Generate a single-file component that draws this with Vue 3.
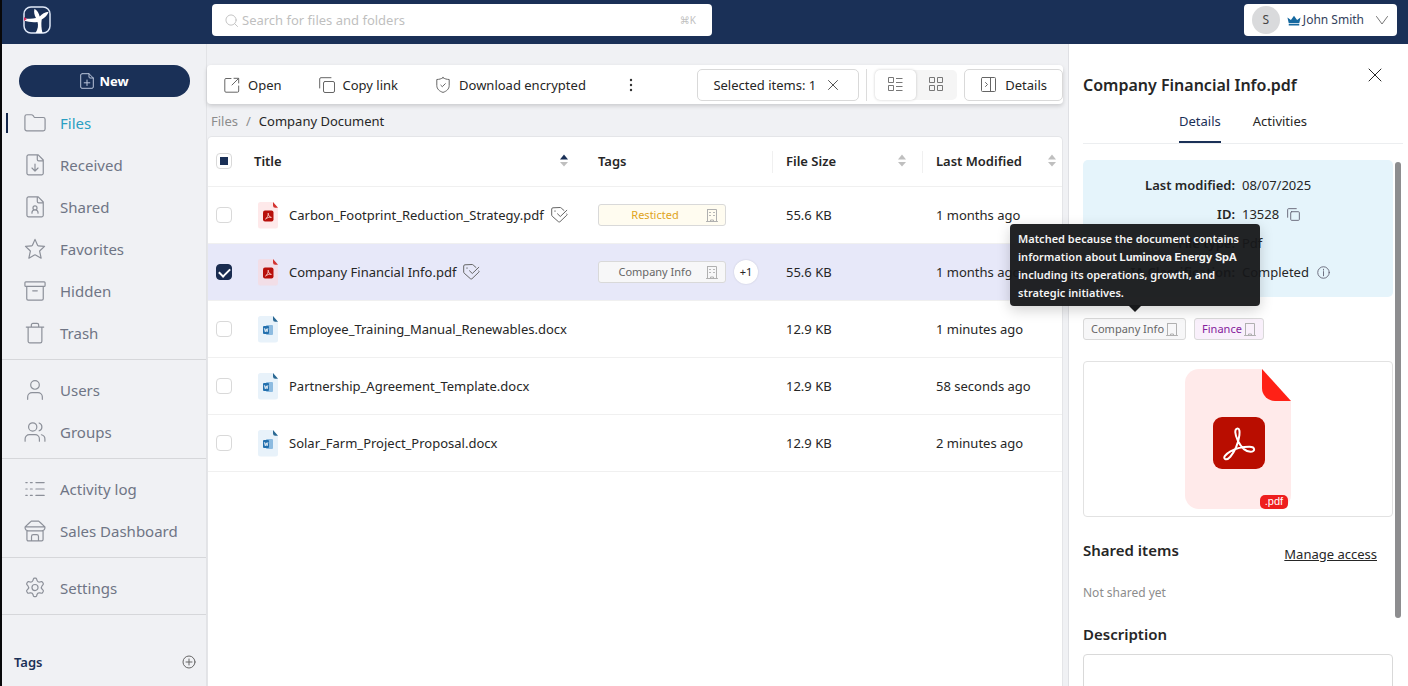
<script setup>
import { ref } from 'vue'

const groups = [
  [
    { label: 'Files', icon: 'folder', active: true },
    { label: 'Received', icon: 'received' },
    { label: 'Shared', icon: 'shared' },
    { label: 'Favorites', icon: 'star' },
    { label: 'Hidden', icon: 'archive' },
    { label: 'Trash', icon: 'trash' },
  ],
  [
    { label: 'Users', icon: 'user' },
    { label: 'Groups', icon: 'users' },
  ],
  [
    { label: 'Activity log', icon: 'list' },
    { label: 'Sales Dashboard', icon: 'store' },
  ],
  [{ label: 'Settings', icon: 'gear' }],
]

const icons = {
  folder: 'M1 18.500V5a2 2 0 0 1 2-2H8c.8 0 1.500.4 2 1l.9 1.200c.4.5 1 .8 1.600.8H21a2 2 0 0 1 2 2v10.500a2 2 0 0 1-2 2H3a2 2 0 0 1-2-2z',
  received: 'M5 1h10.500l5.500 5.500V21a1.800 1.800 0 0 1-1.800 1.800H5A1.800 1.800 0 0 1 3.200 21V2.800A1.800 1.800 0 0 1 5 1zM14.500 1V6c0 .8.6 1.500 1.500 1.500h5M12 11v7.500M8.700 15.300l3.300 3.300 3.300-3.300',
  shared: 'M5 1h10.500l5.500 5.500V21a1.800 1.800 0 0 1-1.800 1.800H5A1.800 1.800 0 0 1 3.200 21V2.800A1.800 1.800 0 0 1 5 1zM14.500 1V6c0 .8.6 1.500 1.500 1.500h5M14.200 13a2.200 2.200 0 1 1-4.400 0 2.200 2.200 0 0 1 4.400 0zM8.700 18.800v-.8c0-1.600 1.200-2.700 3.300-2.700s3.300 1.100 3.300 2.700v.8',
  star: 'M12 1.500l2.900 6.600c.1.3.3.4.6.4l6.900.6-5.100 4.800c-.2.2-.3.5-.2.8l1.600 7.300-6.100-3.500a1.200 1.200 0 0 0-1.200 0L5.300 22l1.600-7.300c.1-.3 0-.6-.2-.8L1.600 9.100l6.900-.6c.3 0 .5-.1.6-.4z',
  archive: 'M2 2h20a1 1 0 0 1 1 1v3a1 1 0 0 1-1 1H2a1 1 0 0 1-1-1V3a1 1 0 0 1 1-1zM3 7v13.500A1.500 1.500 0 0 0 4.500 22h15a1.500 1.500 0 0 0 1.500-1.500V7M9.500 11.800h5',
  trash: 'M2.500 5.500h19M4.500 5.500V21A1.800 1.800 0 0 0 6.300 22.800h11.400A1.800 1.800 0 0 0 19.500 21V5.500M8 5.500V3.200A1.700 1.700 0 0 1 9.700 1.500h4.600A1.700 1.700 0 0 1 16 3.200v2.300',
  user: 'M16.700 6.500a4.700 4.700 0 1 1-9.400 0 4.700 4.700 0 0 1 9.400 0zM4 22.200v-2.700A4.800 4.800 0 0 1 8.800 14.800h6.400a4.800 4.800 0 0 1 4.800 4.700v2.700',
  users: 'M14 6.500a4.500 4.500 0 1 1-9 0 4.500 4.500 0 0 1 9 0zM1.200 22v-2.500A4.700 4.700 0 0 1 5.900 14.800h6.200a4.700 4.700 0 0 1 4.700 4.700V22M16.500 2.200a4.500 4.500 0 0 1 0 8.500M19 15c2.400.6 3.800 2.400 3.800 4.500V22',
  list: 'M2 5h1.500M2 12h1.500M2 19h1.500M7 5h2M7 12h2M7 19h2M13 5h9M13 12h9M13 19h9',
  store: 'M6 3l2-1.800h8L18 3M6 3L1.200 7.500v1.500a3.500 3.500 0 0 0 3.500 2.800h14.600A3.500 3.500 0 0 0 22.800 9V7.500L18 3M1.200 7.500h21.600M3.200 12v9.300a1.500 1.500 0 0 0 1.500 1.500h14.600a1.500 1.500 0 0 0 1.500-1.500V12M8.200 22.500V18a2 2 0 0 1 2-2h3.600a2 2 0 0 1 2 2v4.500',
  gear: 'M9.800 3.700l.5-1.600c.2-.5.6-.8 1.100-.8h1.200c.5 0 .9.300 1.100.8l.5 1.600c.4 1.300 1.700 2.100 3.100 1.800l1.600-.4c.5-.1 1 .1 1.300.6l.8 1.300c.2.500.2 1-.2 1.400l-1.100 1.200c-.9 1-.9 2.600 0 3.600l1.100 1.200c.4.400.4.900.2 1.400l-.8 1.300c-.3.500-.8.700-1.300.6l-1.600-.4c-1.400-.3-2.700.5-3.100 1.800l-.5 1.600c-.2.500-.6.800-1.100.8h-1.200c-.5 0-.9-.3-1.100-.8l-.5-1.600c-.4-1.300-1.700-2.100-3.100-1.800l-1.600.4c-.5.100-1-.1-1.300-.6L3 15.800c-.2-.5-.2-1 .2-1.400l1.100-1.200c.9-1 .9-2.600 0-3.600L3.200 8.400c-.4-.4-.4-.9-.2-1.400l.8-1.300c.3-.5.8-.7 1.300-.6l1.600.4c1.400.3 2.700-.5 3.100-1.800zM15.300 11.500a3.300 3.300 0 1 1-6.600 0 3.300 3.300 0 0 1 6.600 0z',
}

const files = ref([
  { name: 'Carbon_Footprint_Reduction_Strategy.pdf', type: 'pdf', matched: true, tag: 'Resticted', tone: 'gold', size: '55.6 KB', date: '1 months ago', checked: false },
  { name: 'Company Financial Info.pdf', type: 'pdf', matched: true, tag: 'Company Info', tone: 'gray', more: '+1', size: '55.6 KB', date: '1 months ago', checked: true },
  { name: 'Employee_Training_Manual_Renewables.docx', type: 'docx', size: '12.9 KB', date: '1 minutes ago', checked: false },
  { name: 'Partnership_Agreement_Template.docx', type: 'docx', size: '12.9 KB', date: '58 seconds ago', checked: false },
  { name: 'Solar_Farm_Project_Proposal.docx', type: 'docx', size: '12.9 KB', date: '2 minutes ago', checked: false },
])

const building = 'M1.500.5h9v12M1.500.5v12M.5 12.500h11M4.500 12.500V11h3v1.500'
const windows = 'M3.500 3.500h1M7.500 3.500h1M3.500 6.500h1M7.500 6.500h1'
</script>

<template>
  <div class="app">
    <header class="topbar">
      <a class="logo" href="#" aria-label="Home">
        <svg viewBox="0 0 28 28" width="28" height="28">
          <rect x="1" y="1" width="26" height="26" rx="7" fill="none" stroke="#dfe8f8" stroke-width="1.500" />
          <path d="M12.500 27c2.600-4 3-8 2-11C10 16.500 5 16 1.500 14.800l.2-2.600c4 .8 8 .6 11.300-.2C11.500 9.500 10.500 6 11.500 2.800c2.800 1.700 4.500 4.700 5.200 7.700 2.300-2.500 5.300-4.300 9-4.700-1 3.200-3.800 6-7 7.700-.700 4.500-.3 9 .8 13.500z" fill="#fff" />
          <path d="M1 11v4l3-2z" fill="#d6285c" />
        </svg>
      </a>
      <label class="search">
        <svg viewBox="0 0 14 14" width="13" height="13" class="ln"><circle cx="6.500" cy="6.500" r="5.500" /><path d="M10.500 10.500l3 3" /></svg>
        <input type="search" placeholder="Search for files and folders" aria-label="Search" />
        <kbd>⌘K</kbd>
      </label>
      <button class="account" type="button">
        <span class="avatar">S</span>
        <svg class="crown" viewBox="0 0 16 12" width="14" height="11"><path d="M.500 2.500l4 3L8 .5l3.500 5 4-3L14 9H2zM2 10h12v1.800H2z" fill="#15689f" /></svg>
        <span>John Smith</span>
        <svg class="ln caret" viewBox="0 0 12 9" width="12" height="9"><path d="M.5.5L6 8 11.500.5" /></svg>
      </button>
    </header>

    <div class="body">
      <nav class="sidebar">
        <button class="new" type="button">
          <svg viewBox="0 0 14 16" width="14" height="16" class="ln"><path d="M2.500.7h6.500l4.300 4.300v9a1.300 1.300 0 0 1-1.300 1.300H2A1.300 1.300 0 0 1 .7 14V2A1.300 1.300 0 0 1 2 .7zM9 .7V4a1 1 0 0 0 1 1h3.300M7 7v5.500M4.200 9.800h5.600" /></svg>
          New
        </button>
        <ul v-for="(g, i) in groups" :key="i" class="group">
          <li v-for="item in g" :key="item.label">
            <a href="#" class="nav" :class="{ active: item.active }">
              <svg viewBox="0 0 24 24" width="22" height="22" class="ln"><path :d="icons[item.icon]" /></svg>
              {{ item.label }}
            </a>
          </li>
        </ul>
        <div class="tags-head">
          <h2>Tags</h2>
          <button type="button" aria-label="Add tag">
            <svg viewBox="0 0 14 14" width="14" height="14" class="ln"><circle cx="7" cy="7" r="6" /><path d="M7 4v6M4 7h6" /></svg>
          </button>
        </div>
      </nav>

      <main class="main">
        <div class="toolbar">
          <button class="tool" type="button">
            <svg viewBox="0 0 16 16" width="16" height="16" class="ln"><path d="M7 1.500H2a1.200 1.200 0 0 0-1.200 1.200V14A1.200 1.200 0 0 0 2 15.200h11.500a1.200 1.200 0 0 0 1.200-1.200V9M10 1.300h4.700V6M14.500 1.500L8 8" /></svg>
            Open
          </button>
          <button class="tool" type="button">
            <svg viewBox="0 0 16 16" width="16" height="16" class="ln"><rect x="4.500" y="4.500" width="11" height="11" rx="1.500" /><path d="M.7 11V2A1.300 1.300 0 0 1 2 .7h10" /></svg>
            Copy link
          </button>
          <button class="tool" type="button">
            <svg viewBox="0 0 16 16" width="16" height="16" class="ln"><path d="M8 .7c1.800 1.200 3.800 1.700 6.200 1.800v6c0 3.500-2.700 5.800-6.200 6.900-3.500-1.100-6.200-3.400-6.200-6.900v-6C4.200 2.400 6.200 1.900 8 .7zM5.800 8.200l1.500 1.500L10.300 6.700" /></svg>
            Download encrypted
          </button>
          <button class="more" type="button" aria-label="More"><svg viewBox="0 0 4 14" width="4" height="14" fill="#333"><circle cx="2" cy="2" r="1.200" /><circle cx="2" cy="7" r="1.200" /><circle cx="2" cy="12" r="1.200" /></svg></button>
          <button class="boxed selected" type="button">
            Selected items: 1
            <svg viewBox="0 0 10 10" width="10" height="10" class="ln"><path d="M.5.5l9 9M9.500.5l-9 9" /></svg>
          </button>
          <span class="rule"></span>
          <div class="views">
            <button type="button" class="on" aria-label="List view"><svg viewBox="0 0 15 15" width="15" height="15" class="ln sq"><path d="M.5.5h5v5h-5zM.5 8.500h5v5h-5zM8 1.500h6.500M8 5.500h6.500M8 9.500h6.500M8 13.500h6.500" /></svg></button>
            <button type="button" aria-label="Grid view"><svg viewBox="0 0 15 15" width="15" height="15" class="ln sq"><path d="M.5.5h5v5h-5zM.5 8.500h5v5h-5zM8.500.5h5v5h-5zM8.500 8.500h5v5h-5z" /></svg></button>
          </div>
          <button class="boxed details" type="button">
            <svg viewBox="0 0 15 15" width="15" height="15" class="ln"><path d="M1.500.5h12a1 1 0 0 1 1 1v12a1 1 0 0 1-1 1h-12a1 1 0 0 1-1-1v-12a1 1 0 0 1 1-1zM9.500.5v14M4.500 5.500l2 2-2 2" /></svg>
            Details
          </button>
        </div>

        <div class="crumbs"><a href="#">Files</a><span class="slash">/</span><span class="here">Company Document</span></div>

        <div class="card">
          <table>
            <colgroup><col class="c1" /><col /><col class="c3" /><col class="c4" /><col class="c5" /></colgroup>
            <thead>
              <tr>
                <th class="pick"><input type="checkbox" class="partial" aria-label="Select all" /></th>
                <th><div class="head">Title <svg class="sort asc" viewBox="0 0 8 13" width="8" height="13"><path class="up" d="M0 5.500L4 .5l4 5z" /><path d="M0 8h8l-4 4.500z" /></svg></div></th>
                <th>Tags</th>
                <th class="sep"><div class="head">File Size <svg class="sort" viewBox="0 0 8 13" width="8" height="13"><path d="M0 5.500L4 .5l4 5z" /><path d="M0 8h8l-4 4.500z" /></svg></div></th>
                <th class="sep"><div class="head last">Last Modified <svg class="sort" viewBox="0 0 8 13" width="8" height="13"><path d="M0 5.500L4 .5l4 5z" /><path d="M0 8h8l-4 4.500z" /></svg></div></th>
              </tr>
            </thead>
            <tbody>
              <tr v-for="f in files" :key="f.name" :class="{ sel: f.checked }">
                <td class="pick"><input v-model="f.checked" type="checkbox" :aria-label="f.name" /></td>
                <td>
                  <div class="file">
                    <svg v-if="f.type === 'pdf'" viewBox="0 0 22 28" width="22" height="28">
                      <path d="M3.500 1H16l5 6v18a2.500 2.500 0 0 1-2.500 2.500h-15A2.500 2.500 0 0 1 1 25V3.500A2.500 2.500 0 0 1 3.500 1z" fill="#fdd3d6" fill-opacity=".5" />
                      <path d="M16 1v3.500A2.200 2.200 0 0 0 18.200 6.700H21z" fill="#d3322f" />
                      <rect x="6" y="9.500" width="10.500" height="11" rx="2" fill="#b80f0a" />
                      <path d="M8.500 18c2-1.500 3-3.700 2.700-5.800 0 2.100 1.200 3.900 3.200 4.200-2.200-.4-4.100.2-5.900 1.600z" fill="none" stroke="#ffd9d6" stroke-width=".8" />
                    </svg>
                    <svg v-else viewBox="0 0 22 28" width="22" height="28">
                      <path d="M3.500 1H16l5 6v18a2.500 2.500 0 0 1-2.500 2.500h-15A2.500 2.500 0 0 1 1 25V3.500A2.500 2.500 0 0 1 3.500 1z" fill="#e8f2fa" />
                      <path d="M16 1v3.500A2.200 2.200 0 0 0 18.200 6.700H21z" fill="#2a6893" />
                      <rect x="9" y="10" width="7" height="10" rx="1" fill="#8dbbe0" />
                      <rect x="6" y="11" width="6" height="8" rx="1" fill="#2370ae" />
                      <path d="M7.300 13.200l1 3.600.9-3 .9 3 .8-3.600" fill="none" stroke="#fff" stroke-width=".8" />
                    </svg>
                    <span>{{ f.name }}</span>
                    <svg v-if="f.matched" class="ln match" viewBox="0 0 17 16" width="17" height="16"><path d="M13 3.500L10.200 1C9.800.7 9.500.5 9 .5L2 .8C1.200.8.700 1.300.700 2v6c0 .5.2.9.5 1.200l6.200 5.500c.5.4 1.200.4 1.600 0l6.800-6.500c.4-.4.4-.9 0-1.300M6.500 6.800L9.300 9.500l6.500-6.200M4 3.800v.6" /></svg>
                  </div>
                </td>
                <td>
                  <div v-if="f.tag" class="tagcell">
                    <span class="tag wide" :class="f.tone"><span>{{ f.tag }}</span><svg viewBox="0 0 12 13" width="12" height="13" class="ln"><path :d="building" /><path :d="windows" /></svg></span>
                    <button v-if="f.more" class="plus" type="button">{{ f.more }}</button>
                  </div>
                </td>
                <td>{{ f.size }}</td>
                <td>{{ f.date }}</td>
              </tr>
            </tbody>
          </table>
        </div>
      </main>

      <aside class="panel">
        <div class="panel-head">
          <h1>Company Financial Info.pdf</h1>
          <button type="button" aria-label="Close"><svg viewBox="0 0 14 14" width="14" height="14" class="ln"><path d="M1 1l12 12M13 1L1 13" /></svg></button>
        </div>
        <div class="tabs">
          <button type="button" class="on">Details</button>
          <button type="button">Activities</button>
        </div>
        <div class="content">
          <dl class="info">
            <dt>Last modified:</dt><dd>08/07/2025</dd>
            <dt>ID:</dt><dd>13528 <svg class="ln" viewBox="0 0 14 14" width="13" height="13"><rect x="4" y="4" width="9.300" height="9.300" rx="1" /><path d="M.7 10V1.700a1 1 0 0 1 1-1H10" /></svg></dd>
            <dt>File type:</dt><dd>Pdf</dd>
            <dt>IA Classification:</dt><dd>Completed <svg class="ln" viewBox="0 0 14 14" width="13" height="13"><circle cx="7" cy="7" r="6.200" /><path d="M7 6v4.500M7 3.500v1" /></svg></dd>
          </dl>
          <div class="chips">
            <span class="tag gray anchor">Company Info<svg viewBox="0 0 12 13" width="12" height="13" class="ln"><path :d="building" /></svg>
              <span class="tip" role="tooltip">Matched because the document contains information about <b>Luminova Energy SpA</b> including its operations, growth, and strategic initiatives.</span>
            </span>
            <span class="tag purple">Finance<svg viewBox="0 0 12 13" width="12" height="13" class="ln"><path :d="building" /></svg></span>
          </div>
          <div class="preview">
            <svg viewBox="0 0 106 140" width="106" height="140">
              <path d="M14 0h63l29 32v94a14 14 0 0 1-14 14H14a14 14 0 0 1-14-14V14A14 14 0 0 1 14 0z" fill="#ffeaea" />
              <path d="M77 0v19a13 13 0 0 0 13 13h16z" fill="#ff2116" />
              <rect x="28" y="48" width="52" height="52" rx="9" fill="#b90d00" />
              <path d="M52.700 59.500c-3.500 0-3 6 .3 12.500 3 6 7.500 10.800 12.500 10.800 5 0 5-5-1-5-6 0-13.500 1.400-19 4.600-5.500 3.200-7.500 6.100-5.500 7.500 3 1.900 7.500-3.900 11-11.400 3.300-7.500 5.200-19 1.700-19z" fill="none" stroke="#fff" stroke-width="2" stroke-linejoin="round" />
              <rect x="75" y="126" width="28" height="14" rx="5" fill="#ee1e1e" />
              <text x="89" y="136" fill="#fff" font-size="11" font-family="Liberation Sans, sans-serif" text-anchor="middle">.pdf</text>
            </svg>
          </div>
          <div class="shared"><h2>Shared items</h2><a href="#">Manage access</a></div>
          <p class="none">Not shared yet</p>
          <label class="desc" for="desc">Description</label>
          <textarea id="desc"></textarea>
          <span class="thumb"></span>
        </div>
      </aside>
    </div>
  </div>
</template>

<style>
body { margin: 0; overflow: hidden; }
</style>

<style scoped>
* { box-sizing: border-box; }
.app {
  height: 100vh; display: flex; flex-direction: column; overflow: hidden;
  border-left: 2px solid #08080a; background: #f0f1f4; color: #262626;
  font: 13px/20px "Noto Sans", "Open Sans", sans-serif;
}
button, input, textarea { font: inherit; color: inherit; }
button { border: 0; background: none; padding: 0; margin: 0; cursor: pointer; display: flex; align-items: center; }
a { color: inherit; text-decoration: none; }
h1, h2, p, ul, dl, dd { margin: 0; padding: 0; }
svg { flex: none; display: block; overflow: visible; }
.ln { fill: none; stroke: currentColor; stroke-width: 1; stroke-linecap: round; stroke-linejoin: round; }
.sq { stroke-linecap: butt; stroke-linejoin: miter; }

.topbar { flex: none; height: 44px; display: flex; align-items: center; background: #1a3057; padding: 0 11px 4px 21px; }
.logo { width: 189px; }
.search { flex: 0 1 500px; height: 32px; display: flex; align-items: center; gap: 4px; padding: 0 16px 0 13px; background: #fff; border-radius: 4px; color: #bfbfbf; }
.search input { flex: 1; min-width: 0; border: 0; outline: 0; background: none; padding: 0; }
.search input::placeholder { color: #bfbfbf; opacity: 1; }
.search kbd { font: 10px/16px "Noto Sans", "DejaVu Sans", sans-serif; }
.account { margin-left: auto; height: 32px; padding: 0 9px 0 8px; background: #fff; border-radius: 4px; font-size: 12px; color: #33415c; }
.avatar { width: 28px; height: 28px; border-radius: 50%; background: #d9dadc; color: #444; line-height: 28px; margin-right: 7px; }
.crown { margin-right: 2px; }
.caret { margin-left: 12px; color: #777; }

.body { flex: 1; min-height: 0; display: flex; }
.sidebar { flex: none; width: 205px; border-right: 1px solid #e2e3e6; padding-top: 21px; }
.new { width: 171px; height: 32px; margin: 0 0 5px 17px; justify-content: center; gap: 5px; border-radius: 16px; background: #1a3057; color: #fff; font-weight: 700; }
.new svg { color: #b9c4da; }
.group { list-style: none; padding-bottom: 5px; margin-bottom: 9px; border-bottom: 1px solid #d6d7da; }
.nav { height: 42px; display: flex; align-items: center; gap: 14px; padding-left: 22px; font-size: 15px; color: #6f7585; }
.nav svg { color: #8c9099; stroke-width: 1.3; }
.nav.active { color: #2a9fc2; position: relative; }
.nav.active::before { content: ""; position: absolute; left: 4px; top: 11px; width: 2px; height: 20px; background: #14264a; }
.tags-head { display: flex; align-items: center; justify-content: space-between; padding: 28px 10px 0 12px; }
.tags-head h2 { font-size: 13px; font-weight: 600; color: #1a3057; }
.tags-head button { color: #666; }

.main { flex: 1; min-width: 0; margin-right: 5px; display: flex; flex-direction: column; padding-top: 21px; }
.toolbar { height: 39px; display: flex; align-items: center; background: #fff; border-radius: 4px; box-shadow: 0 2px 4px rgba(0, 0, 0, .16); padding-left: 17px; white-space: nowrap; }
.tool { gap: 8px; margin-right: 37px; }
.tool svg { color: #666; }
.more { margin-left: 6px; }
.boxed { height: 32px; border: 1px solid #d9d9d9; border-radius: 5px; background: #fff; }
.selected { margin-left: auto; padding: 0 20px 0 15px; gap: 12px; }
.selected svg { color: #555; }
.rule { width: 1px; height: 32px; background: #dcdcdc; margin: 0 8px 0 7px; }
.views { display: flex; background: #f5f5f5; border-radius: 5px; margin-right: 7px; }
.views button { width: 41px; height: 30px; justify-content: center; border-radius: 5px; color: #777; }
.views .on { background: #fff; box-shadow: 0 0 3px rgba(0, 0, 0, .2); }
.details { gap: 9px; padding: 0 15px 0 16px; }
.details svg { color: #666; }
.crumbs { display: flex; gap: 8px; padding: 7px 0 5px 4px; color: #8c8c8c; }
.here { color: #262626; }

.card { flex: 1; min-height: 0; background: #fff; border: 1px solid #e4e5e8; border-bottom: 0; border-radius: 5px 5px 0 0; }
table { width: 100%; table-layout: fixed; border-collapse: separate; border-spacing: 0; }
.c1 { width: 32px; } .c3 { width: 188px; } .c4 { width: 150px; } .c5 { width: 140px; }
th { height: 50px; text-align: left; font-weight: 600; padding: 0 0 2px 14px; border-bottom: 1px solid #f0f0f0; position: relative; }
td { height: 57px; padding: 0 0 0 14px; border-bottom: 1px solid #f0f0f0; white-space: nowrap; }
.pick { padding-left: 8px; }
.sep::before { content: ""; position: absolute; left: 0; top: 14px; width: 1px; height: 22px; background: #f0f0f0; }
.head { display: flex; align-items: center; justify-content: space-between; padding-right: 16px; }
.last { padding-right: 6px; }
.sort { fill: #bfbfbf; }
.asc .up { fill: #1a3057; }
.sel td { background: #e7e8f9; }
input[type="checkbox"] { appearance: none; display: block; width: 16px; height: 16px; margin: 0; border: 1px solid #d9d9d9; border-radius: 4px; background: #fff; position: relative; }
.partial::after { content: ""; position: absolute; left: 3px; top: 3px; width: 8px; height: 8px; background: #1a3057; }
input[type="checkbox"]:checked { background: #1a2c50; border-color: #1a2c50; }
input[type="checkbox"]:checked::after { content: ""; position: absolute; left: 4px; top: 1px; width: 5px; height: 9px; border: solid #fff; border-width: 0 2px 2px 0; transform: rotate(45deg); }
.file { display: flex; align-items: center; gap: 10px; padding-left: 3px; }
.match { margin-left: -3px; color: #666; }
.tagcell { display: flex; align-items: center; gap: 8px; }
.tag { display: inline-flex; align-items: center; gap: 2px; height: 22px; border: 1px solid #d9d9d9; border-radius: 3px; background: #f7f7f8; font-size: 11px; padding: 0 7px; }
.tag svg { color: #b0b0b0; }
.wide { width: 128px; }
.wide span { flex: 1; text-align: center; }
.gray { color: #666; }
.gold { color: #e0a420; background: #fffcf0; }
.purple { color: #86209c; background: #f9f0fb; }
.plus { width: 24px; height: 24px; border-radius: 50%; background: #fff; justify-content: center; font-size: 11px; box-shadow: 0 0 2px rgba(0, 0, 0, .15); }

.panel { flex: none; width: 340px; background: #fff; border-left: 1px solid #dfe0e4; display: flex; flex-direction: column; padding: 21px 5px 0 14px; }
.panel-head { display: flex; align-items: flex-start; justify-content: space-between; padding-right: 21px; height: 45px; }
.panel-head h1 { font-size: 16px; font-weight: 600; line-height: 40px; }
.panel-head button { height: 20px; }
.tabs { display: flex; justify-content: center; gap: 32px; border-bottom: 1px solid #eceef0; }
.tabs button { height: 33px; padding-bottom: 9px; border-bottom: 2px solid transparent; }
.tabs .on { color: #1a3057; border-color: #1a3057; }
.content { position: relative; flex: 1; min-height: 0; padding: 16px 10px 0 0; }
.info { display: grid; grid-template-columns: 152px 1fr; gap: 9px 7px; padding: 15px 0; height: 137px; background: #e5f4fb; border-radius: 5px; }
.info dt { text-align: right; font-weight: 600; white-space: nowrap; }
.info dd { display: flex; align-items: center; gap: 8px; }
.info svg { color: #667; }
.chips { display: flex; gap: 8px; margin: 21px 0; }
.anchor { position: relative; }
.tip { position: absolute; left: -74px; bottom: 33px; width: 250px; height: 82px; padding: 6px 8px; border-radius: 4px; background: rgba(22, 23, 25, .95); color: #f4f4f4; font-size: 11px; font-weight: 600; line-height: 18px; box-shadow: 0 4px 14px rgba(0, 0, 0, .18); }
.tip b { font-family: Inter, sans-serif; font-weight: 700; }
.tip::after { content: ""; position: absolute; left: 118px; bottom: -6px; border: 7px solid transparent; border-top-color: #18191b; border-bottom: 0; }
.preview { height: 156px; display: flex; align-items: center; justify-content: center; border: 1px solid #e2e2e2; border-radius: 4px; }
.shared { display: flex; justify-content: space-between; padding: 23px 16px 0 0; }
.shared h2, .desc { font-size: 15px; font-weight: 600; }
.shared a { text-decoration: underline; line-height: 28px; }
.none { color: #8c8c8c; font-size: 12px; margin: 15px 0 21px; }
.desc { display: block; margin-bottom: 10px; }
textarea { display: block; width: 100%; height: 80px; border: 1px solid #d9d9d9; border-radius: 4px; resize: none; outline: 0; }
.thumb { position: absolute; right: 2px; top: 18px; width: 6px; height: 456px; border-radius: 3px; background: #8d8d8f; }
</style>
